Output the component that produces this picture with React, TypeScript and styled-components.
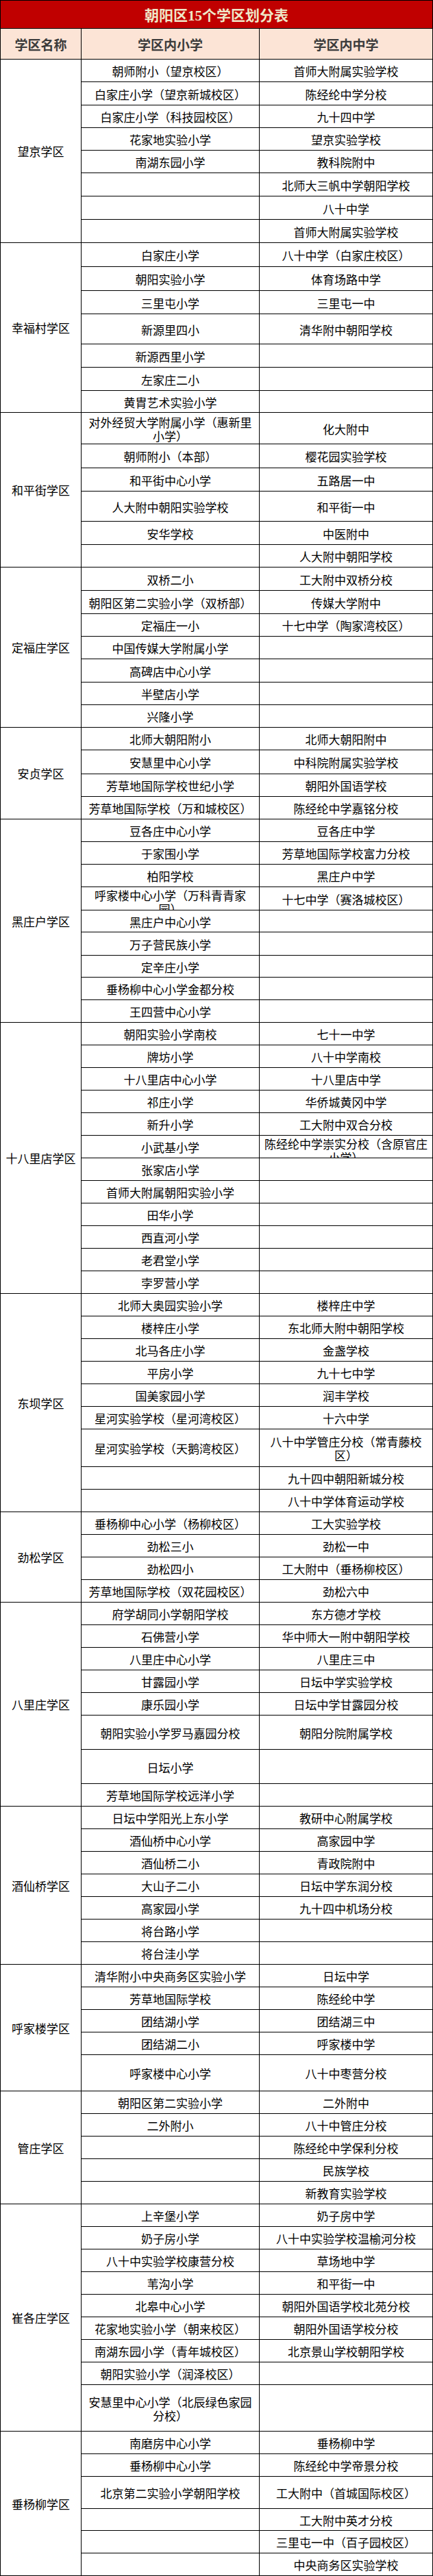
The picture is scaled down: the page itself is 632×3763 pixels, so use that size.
import styled, { createGlobalStyle } from 'styled-components';

type SchoolRow = [string, string, number?];

interface District {
  name: string;
  rows: SchoolRow[];
}

const districts: District[] = [
  {
    name: '望京学区',
    rows: [
      ['朝师附小（望京校区）', '首师大附属实验学校'],
      ['白家庄小学（望京新城校区）', '陈经纶中学分校', 34],
      ['白家庄小学（科技园校区）', '九十四中学'],
      ['花家地实验小学', '望京实验学校'],
      ['南湖东园小学', '教科院附中'],
      ['', '北师大三帆中学朝阳学校', 34],
      ['', '八十中学', 34],
      ['', '首师大附属实验学校', 34],
    ],
  },
  {
    name: '幸福村学区',
    rows: [
      ['白家庄小学', '八十中学（白家庄校区）', 35],
      ['朝阳实验小学', '体育场路中学', 35],
      ['三里屯小学', '三里屯一中', 34],
      ['新源里四小', '清华附中朝阳学校', 44],
      ['新源西里小学', '', 34],
      ['左家庄二小', '', 34],
      ['黄胄艺术实验小学', '', 32],
    ],
  },
  {
    name: '和平街学区',
    rows: [
      ['对外经贸大学附属小学（惠新里小学）', '化大附中', 46],
      ['朝师附小（本部）', '樱花园实验学校', 35],
      ['和平街中心小学', '五路居一中', 34],
      ['人大附中朝阳实验学校', '和平街一中', 44],
      ['安华学校', '中医附中', 34],
      ['', '人大附中朝阳学校'],
    ],
  },
  {
    name: '定福庄学区',
    rows: [
      ['双桥二小', '工大附中双桥分校', 34],
      ['朝阳区第二实验小学（双桥部）', '传媒大学附中', 34],
      ['定福庄一小', '十七中学（陶家湾校区）'],
      ['中国传媒大学附属小学', ''],
      ['高碑店中心小学', '', 34],
      ['半壁店小学', ''],
      ['兴隆小学', ''],
    ],
  },
  {
    name: '安贞学区',
    rows: [
      ['北师大朝阳附小', '北师大朝阳附中'],
      ['安慧里中心小学', '中科院附属实验学校', 35],
      ['芳草地国际学校世纪小学', '朝阳外国语学校'],
      ['芳草地国际学校（万和城校区）', '陈经纶中学嘉铭分校'],
    ],
  },
  {
    name: '黑庄户学区',
    rows: [
      ['豆各庄中心小学', '豆各庄中学'],
      ['于家围小学', '芳草地国际学校富力分校'],
      ['柏阳学校', '黑庄户中学'],
      ['呼家楼中心小学（万科青青家园）', '十七中学（赛洛城校区）', 34],
      ['黑庄户中心小学', '', 32],
      ['万子营民族小学', '', 34],
      ['定辛庄小学', '', 32],
      ['垂杨柳中心小学金都分校', ''],
      ['王四营中心小学', ''],
    ],
  },
  {
    name: '十八里店学区',
    rows: [
      ['朝阳实验小学南校', '七十一中学'],
      ['牌坊小学', '八十中学南校'],
      ['十八里店中心小学', '十八里店中学'],
      ['祁庄小学', '华侨城黄冈中学'],
      ['新升小学', '工大附中双合分校'],
      ['小武基小学', '陈经纶中学崇实分校（含原官庄小学）'],
      ['张家店小学', ''],
      ['首师大附属朝阳实验小学', ''],
      ['田华小学', ''],
      ['西直河小学', ''],
      ['老君堂小学', ''],
      ['孛罗营小学', ''],
    ],
  },
  {
    name: '东坝学区',
    rows: [
      ['北师大奥园实验小学', '楼梓庄中学'],
      ['楼梓庄小学', '东北师大附中朝阳学校'],
      ['北马各庄小学', '金盏学校'],
      ['平房小学', '九十七中学'],
      ['国美家园小学', '润丰学校'],
      ['星河实验学校（星河湾校区）', '十六中学'],
      ['星河实验学校（天鹅湾校区）', '八十中学管庄分校（常青藤校区）', 55],
      ['', '九十四中朝阳新城分校'],
      ['', '八十中学体育运动学校'],
    ],
  },
  {
    name: '劲松学区',
    rows: [
      ['垂杨柳中心小学（杨柳校区）', '工大实验学校'],
      ['劲松三小', '劲松一中'],
      ['劲松四小', '工大附中（垂杨柳校区）'],
      ['芳草地国际学校（双花园校区）', '劲松六中'],
    ],
  },
  {
    name: '八里庄学区',
    rows: [
      ['府学胡同小学朝阳学校', '东方德才学校'],
      ['石佛营小学', '华中师大一附中朝阳学校'],
      ['八里庄中心小学', '八里庄三中'],
      ['甘露园小学', '日坛中学实验学校'],
      ['康乐园小学', '日坛中学甘露园分校'],
      ['朝阳实验小学罗马嘉园分校', '朝阳分院附属学校', 50],
      ['日坛小学', '', 50],
      ['芳草地国际学校远洋小学', ''],
    ],
  },
  {
    name: '酒仙桥学区',
    rows: [
      ['日坛中学阳光上东小学', '教研中心附属学校'],
      ['酒仙桥中心小学', '高家园中学'],
      ['酒仙桥二小', '青政院附中'],
      ['大山子二小', '日坛中学东润分校'],
      ['高家园小学', '九十四中机场分校'],
      ['将台路小学', ''],
      ['将台洼小学', ''],
    ],
  },
  {
    name: '呼家楼学区',
    rows: [
      ['清华附小中央商务区实验小学', '日坛中学'],
      ['芳草地国际学校', '陈经纶中学'],
      ['团结湖小学', '团结湖三中'],
      ['团结湖二小', '呼家楼中学'],
      ['呼家楼中心小学', '八十中枣营分校', 53],
    ],
  },
  {
    name: '管庄学区',
    rows: [
      ['朝阳区第二实验小学', '二外附中'],
      ['二外附小', '八十中管庄分校'],
      ['', '陈经纶中学保利分校'],
      ['', '民族学校'],
      ['', '新教育实验学校'],
    ],
  },
  {
    name: '崔各庄学区',
    rows: [
      ['上辛堡小学', '奶子房中学'],
      ['奶子房小学', '八十中实验学校温榆河分校'],
      ['八十中实验学校康营分校', '草场地中学'],
      ['苇沟小学', '和平街一中'],
      ['北皋中心小学', '朝阳外国语学校北苑分校'],
      ['花家地实验小学（朝来校区）', '朝阳外国语学校分校'],
      ['南湖东园小学（青年城校区）', '北京景山学校朝阳学校'],
      ['朝阳实验小学（润泽校区）', ''],
      ['安慧里中心小学（北辰绿色家园分校）', '', 68],
    ],
  },
  {
    name: '垂杨柳学区',
    rows: [
      ['南磨房中心小学', '垂杨柳中学'],
      ['垂杨柳中心小学', '陈经纶中学帝景分校'],
      ['北京第二实验小学朝阳学校', '工大附中（首城国际校区）', 47],
      ['', '工大附中英才分校', 32],
      ['', '三里屯一中（百子园校区）'],
      ['', '中央商务区实验学校'],
    ],
  },
];

function App() {
  return (
    <>
      <GlobalStyle />
      <Sheet>
        <Title>朝阳区15个学区划分表</Title>
        <HeaderRow>
          <HeaderCell>学区名称</HeaderCell>
          <HeaderCell>学区内小学</HeaderCell>
          <HeaderCell>学区内中学</HeaderCell>
        </HeaderRow>
        {districts.map((d) => (
          <DistrictBlock key={d.name}>
            <NameCell>{d.name}</NameCell>
            <RowList>
              {d.rows.map(([primary, middle, h], i) => (
                <Row key={i} $h={h ?? 33}>
                  <Cell>{primary}</Cell>
                  <Cell>{middle}</Cell>
                </Row>
              ))}
            </RowList>
          </DistrictBlock>
        ))}
      </Sheet>
    </>
  );
}

const GlobalStyle = createGlobalStyle`
  html, body {
    margin: 0;
    padding: 0;
    background: #fff;
  }
  body {
    font-family: "Noto Sans CJK SC", sans-serif;
  }
`;

const Sheet = styled.div`
  width: 632px;
  box-sizing: border-box;
  border: 1px solid #000;
  border-bottom: none;
  color: #000;
`;

const Title = styled.div`
  height: 41px;
  box-sizing: border-box;
  border-bottom: 1px solid #000;
  background: #c00000;
  color: #efe7c8;
  display: flex;
  align-items: center;
  justify-content: center;
  font-family: "Liberation Serif", "Noto Sans CJK SC", serif;
  font-weight: 700;
  font-size: 21px;
`;

const HeaderRow = styled.div`
  display: grid;
  grid-template-columns: 118px 260px 1fr;
  height: 45px;
  box-sizing: border-box;
  border-bottom: 1px solid #000;
  background: #fce4d6;
`;

const HeaderCell = styled.div`
  display: flex;
  align-items: center;
  justify-content: center;
  box-sizing: border-box;
  font-size: 19px;
  font-weight: 700;
  color: #3b3b3b;

  &:not(:last-child) {
    border-right: 1px solid #000;
  }
`;

const DistrictBlock = styled.div`
  display: flex;
`;

const NameCell = styled.div`
  flex: none;
  width: 118px;
  box-sizing: border-box;
  border-right: 1px solid #000;
  border-bottom: 1px solid #000;
  display: flex;
  align-items: center;
  justify-content: center;
  font-size: 17px;
`;

const RowList = styled.div`
  flex: 1;
  display: flex;
  flex-direction: column;
`;

const Row = styled.div<{ $h: number }>`
  display: grid;
  grid-template-columns: 260px 1fr;
  height: ${({ $h }) => $h}px;
  box-sizing: border-box;
  border-bottom: 1px solid #000;
`;

/* cells clip like the spreadsheet: overflowing text starts at the top and is cut */
const Cell = styled.div`
  display: flex;
  align-items: center;
  align-items: safe center;
  justify-content: center;
  text-align: center;
  text-spacing-trim: space-all;
  min-width: 0;
  box-sizing: border-box;
  padding: 2px 3px 0;
  overflow: hidden;
  font-size: 17px;
  line-height: 20px;

  &:first-child {
    border-right: 1px solid #000;
  }
`;

export default App;
